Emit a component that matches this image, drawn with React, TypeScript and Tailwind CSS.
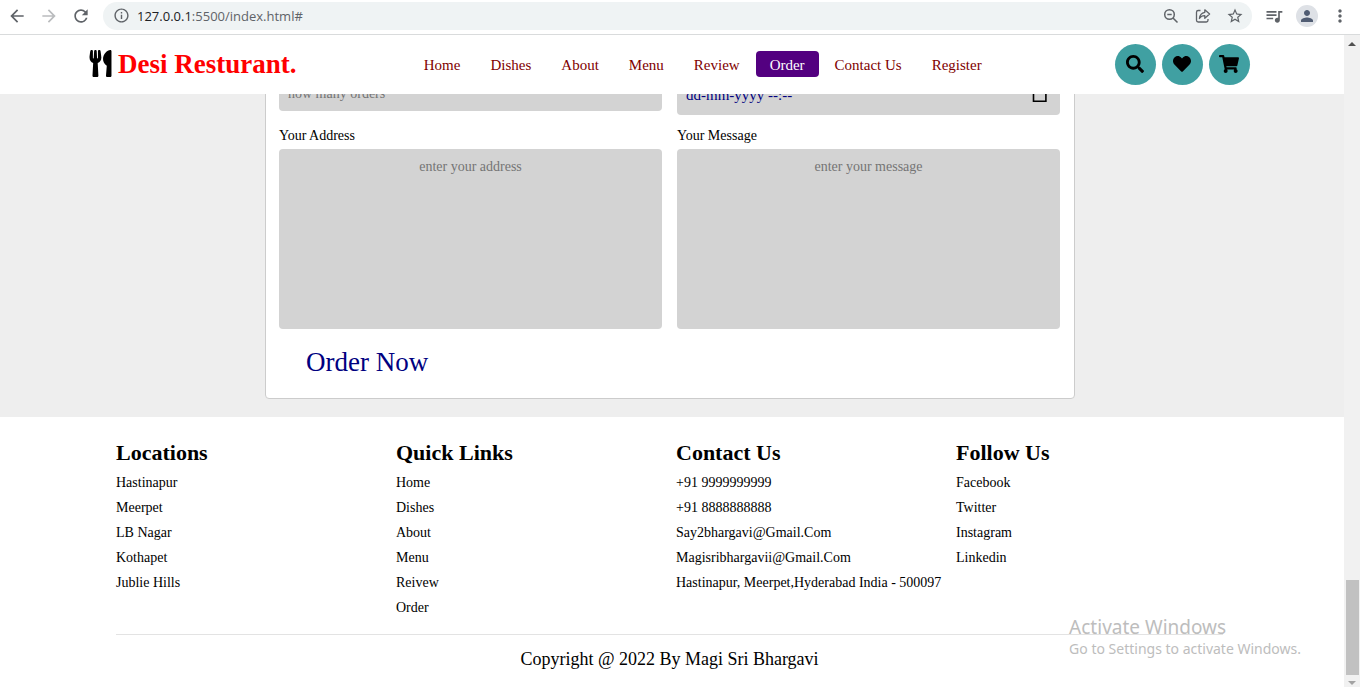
import type { ReactNode } from "react";
import { FaUtensils, FaSearch, FaHeart, FaShoppingCart } from "react-icons/fa";
import {
  MdArrowBack,
  MdArrowForward,
  MdRefresh,
  MdInfoOutline,
  MdStarBorder,
  MdQueueMusic,
  MdPerson,
  MdMoreVert,
} from "react-icons/md";

const navItems = ["Home", "Dishes", "About", "Menu", "Review", "Order", "Contact Us", "Register"];

const footerColumns = [
  { title: "Locations", links: ["Hastinapur", "Meerpet", "LB Nagar", "Kothapet", "Jublie Hills"] },
  { title: "Quick Links", links: ["Home", "Dishes", "About", "Menu", "Reivew", "Order"] },
  {
    title: "Contact Us",
    links: [
      "+91 9999999999",
      "+91 8888888888",
      "Say2bhargavi@Gmail.Com",
      "Magisribhargavii@Gmail.Com",
      "Hastinapur, Meerpet,Hyderabad India - 500097",
    ],
  },
  { title: "Follow Us", links: ["Facebook", "Twitter", "Instagram", "Linkedin"] },
];

function ShareIcon() {
  return (
    <svg width="16" height="16" viewBox="0 0 16 16" fill="none" stroke="currentColor" strokeWidth="1.3" strokeLinejoin="round">
      <path d="M5.500 2.500H3.200A1.700 1.700 0 0 0 1.500 4.200v8.100A1.700 1.700 0 0 0 3.200 14h8.100a1.700 1.700 0 0 0 1.700-1.700V11" />
      <path d="M9.800 1.800 14.600 6l-4.800 4.200V7.700C7.300 7.700 5.600 8.600 4.400 10.500 4.700 7.500 6.300 4.900 9.800 4.300z" />
    </svg>
  );
}

function ZoomOutIcon() {
  return (
    <svg width="16" height="16" viewBox="0 0 16 16" fill="none" stroke="currentColor" strokeWidth="1.5">
      <circle cx="6.500" cy="6.500" r="4.800" />
      <path d="M10 10l4.500 4.500M4.300 6.500h4.400" />
    </svg>
  );
}

function ToolButton({ label, className = "text-[#5f6368]", children }: { label: string; className?: string; children: ReactNode }) {
  return (
    <button type="button" aria-label={label} className={`flex size-5 items-center justify-center ${className}`}>
      {children}
    </button>
  );
}

function BrowserBar() {
  return (
    <div className="flex h-[35px] shrink-0 items-center border-b border-[#d9dbdc] bg-white pr-[10px] pb-[3px] pl-[7px]">
      <div className="flex items-center gap-3">
        <ToolButton label="Back"><MdArrowBack size={20} /></ToolButton>
        <ToolButton label="Forward" className="text-[#babcbe]"><MdArrowForward size={20} /></ToolButton>
        <ToolButton label="Reload"><MdRefresh size={20} /></ToolButton>
      </div>
      <div className="ml-3 flex h-7 flex-1 items-center rounded-full bg-[#eff3f4] pr-[7px] pl-[10px] text-[#5f6368]">
        <MdInfoOutline size={17} />
        <div className="ml-[7px] flex-1 font-['Open_Sans','Noto_Sans',sans-serif] text-[13px] leading-5">
          <span className="text-[#202124]">127.0.0.1</span>:5500/index.html#
        </div>
        <div className="flex items-center gap-3">
          <ToolButton label="Zoom"><ZoomOutIcon /></ToolButton>
          <ToolButton label="Share"><ShareIcon /></ToolButton>
          <ToolButton label="Bookmark"><MdStarBorder size={18} /></ToolButton>
        </div>
      </div>
      <div className="ml-3 flex items-center gap-3">
        <ToolButton label="Media controls"><MdQueueMusic size={22} /></ToolButton>
        <button type="button" aria-label="Profile" className="flex size-[22px] items-center justify-center rounded-full bg-[#dee1e6] text-[#515d73]">
          <MdPerson size={18} />
        </button>
        <ToolButton label="Menu"><MdMoreVert size={20} /></ToolButton>
      </div>
    </div>
  );
}

function SiteHeader() {
  const round = "flex size-10 items-center justify-center rounded-full bg-[#40a0a2]";
  return (
    <header className="relative z-10 flex h-[59px] shrink-0 items-center justify-between bg-white pr-[94px] pb-px pl-[89px]">
      <a href="#home" className="flex items-center gap-[6px] text-[27px] leading-8 font-bold text-[#ff0000]">
        <FaUtensils className="mb-[2px] h-[27px] w-[23px] text-black" />
        Desi Resturant.
      </a>
      <nav className="mr-[6px] flex gap-[2px] text-[15px] leading-6">
        {navItems.map((item) => (
          <a
            key={item}
            href="#"
            className={item === "Order" ? "rounded bg-[#530080] px-[14px] pt-[2px] text-white" : "rounded px-[14px] pt-[2px] text-[#800000]"}
          >
            {item}
          </a>
        ))}
      </nav>
      <div className="flex gap-[6px]">
        <button type="button" aria-label="Search" className={`${round} size-[41px]`}><FaSearch size={18} /></button>
        <button type="button" aria-label="Favourites" className={`${round} size-[41px]`}><FaHeart size={18} /></button>
        <button type="button" aria-label="Cart" className={`${round} size-[41px]`}><FaShoppingCart size={20} /></button>
      </div>
    </header>
  );
}

function OrderSection() {
  const field = "block w-full rounded bg-[#d3d3d3] px-[9px] outline-none placeholder:text-[#757575]";
  const area = "mt-[3px] h-[180px] resize-none py-2 text-center text-[14px] leading-5";
  const label = "block text-[14px] leading-5";
  return (
    <section className="flex h-[323px] shrink-0 flex-col justify-end overflow-hidden bg-[#eeeeee] pr-1 pb-[18px]">
      <form className="mx-auto w-full max-w-[810px] rounded border border-[#cccccc] bg-white pr-[14px] pb-[16px] pl-[13px]">
        <div className="grid grid-cols-2 items-end gap-x-[15px]">
          <div>
            <input aria-label="Number of orders" placeholder="how many orders" className={`${field} h-9 pt-px text-[14px]`} />
            <label htmlFor="address" className={`${label} mt-[15px]`}>Your Address</label>
            <textarea id="address" placeholder="enter your address" className={`${field} ${area}`} />
          </div>
          <div>
            <div className="relative">
              <input aria-label="Date and time" defaultValue="dd-mm-yyyy --:--" className={`${field} h-10 pt-px text-[15px] text-[#000080]`} />
              <button type="button" aria-label="Pick a date" className="absolute top-[9px] right-3">
                <svg width="16" height="18" viewBox="0 0 16 18" fill="none" stroke="black" strokeWidth="1.600">
                  <path d="M1.500 3.500h12.400v13.700H1.500zM2 6h12M5 1v3M11.500 1v3" />
                </svg>
              </button>
            </div>
            <label htmlFor="message" className={`${label} mt-[11px]`}>Your Message</label>
            <textarea id="message" placeholder="enter your message" className={`${field} ${area}`} />
          </div>
        </div>
        <button type="submit" className="mt-[13px] ml-[27px] block text-[27px] leading-10 text-[#000080]">Order Now</button>
      </form>
    </section>
  );
}

function SiteFooter() {
  return (
    <footer className="flex-1 bg-white pr-[121px] pl-[116px]">
      <div className="grid grid-cols-4 gap-x-[13px] pt-[22px] whitespace-nowrap">
        {footerColumns.map((column) => (
          <div key={column.title}>
            <h3 className="text-[22px] leading-7 font-bold">{column.title}</h3>
            <ul className="mt-[3px] text-[14px] leading-[25px]">
              {column.links.map((link) => (
                <li key={link}><a href="#">{link}</a></li>
              ))}
            </ul>
          </div>
        ))}
      </div>
      <p className="mt-[14px] border-t border-[#e3e3e3] pt-3 text-center text-[18px] leading-6">Copyright @ 2022 By Magi Sri Bhargavi</p>
    </footer>
  );
}

function ScrollBar() {
  return (
    <div className="flex w-4 shrink-0 flex-col items-center bg-[#f1f1f1] pt-[6px] pb-[2px]" aria-hidden="true">
      <svg width="8" height="5" viewBox="0 0 8 5"><path d="M0 5 4 1l4 4z" fill="#505050" /></svg>
      <div className="mt-auto h-[95px] w-[13px] bg-[#c1c1c1]" />
      <svg className="mt-[6px]" width="8" height="4" viewBox="0 0 8 4"><path d="M0 0h8L4 4z" fill="#a3a3a3" /></svg>
    </div>
  );
}

export default function App() {
  return (
    <div className="relative flex h-screen flex-col overflow-hidden bg-white font-['Liberation_Serif',serif] text-black">
      <BrowserBar />
      <div className="flex min-h-0 flex-1">
        <main className="flex min-w-0 flex-1 flex-col">
          <SiteHeader />
          <OrderSection />
          <SiteFooter />
        </main>
        <ScrollBar />
      </div>
      <div className="pointer-events-none absolute right-[59px] bottom-[28px] font-['Noto_Sans',sans-serif] text-[#bdbdbd]">
        <div className="text-[19px] leading-6">Activate Windows</div>
        <div className="text-[14px] leading-5">Go to Settings to activate Windows.</div>
      </div>
    </div>
  );
}
